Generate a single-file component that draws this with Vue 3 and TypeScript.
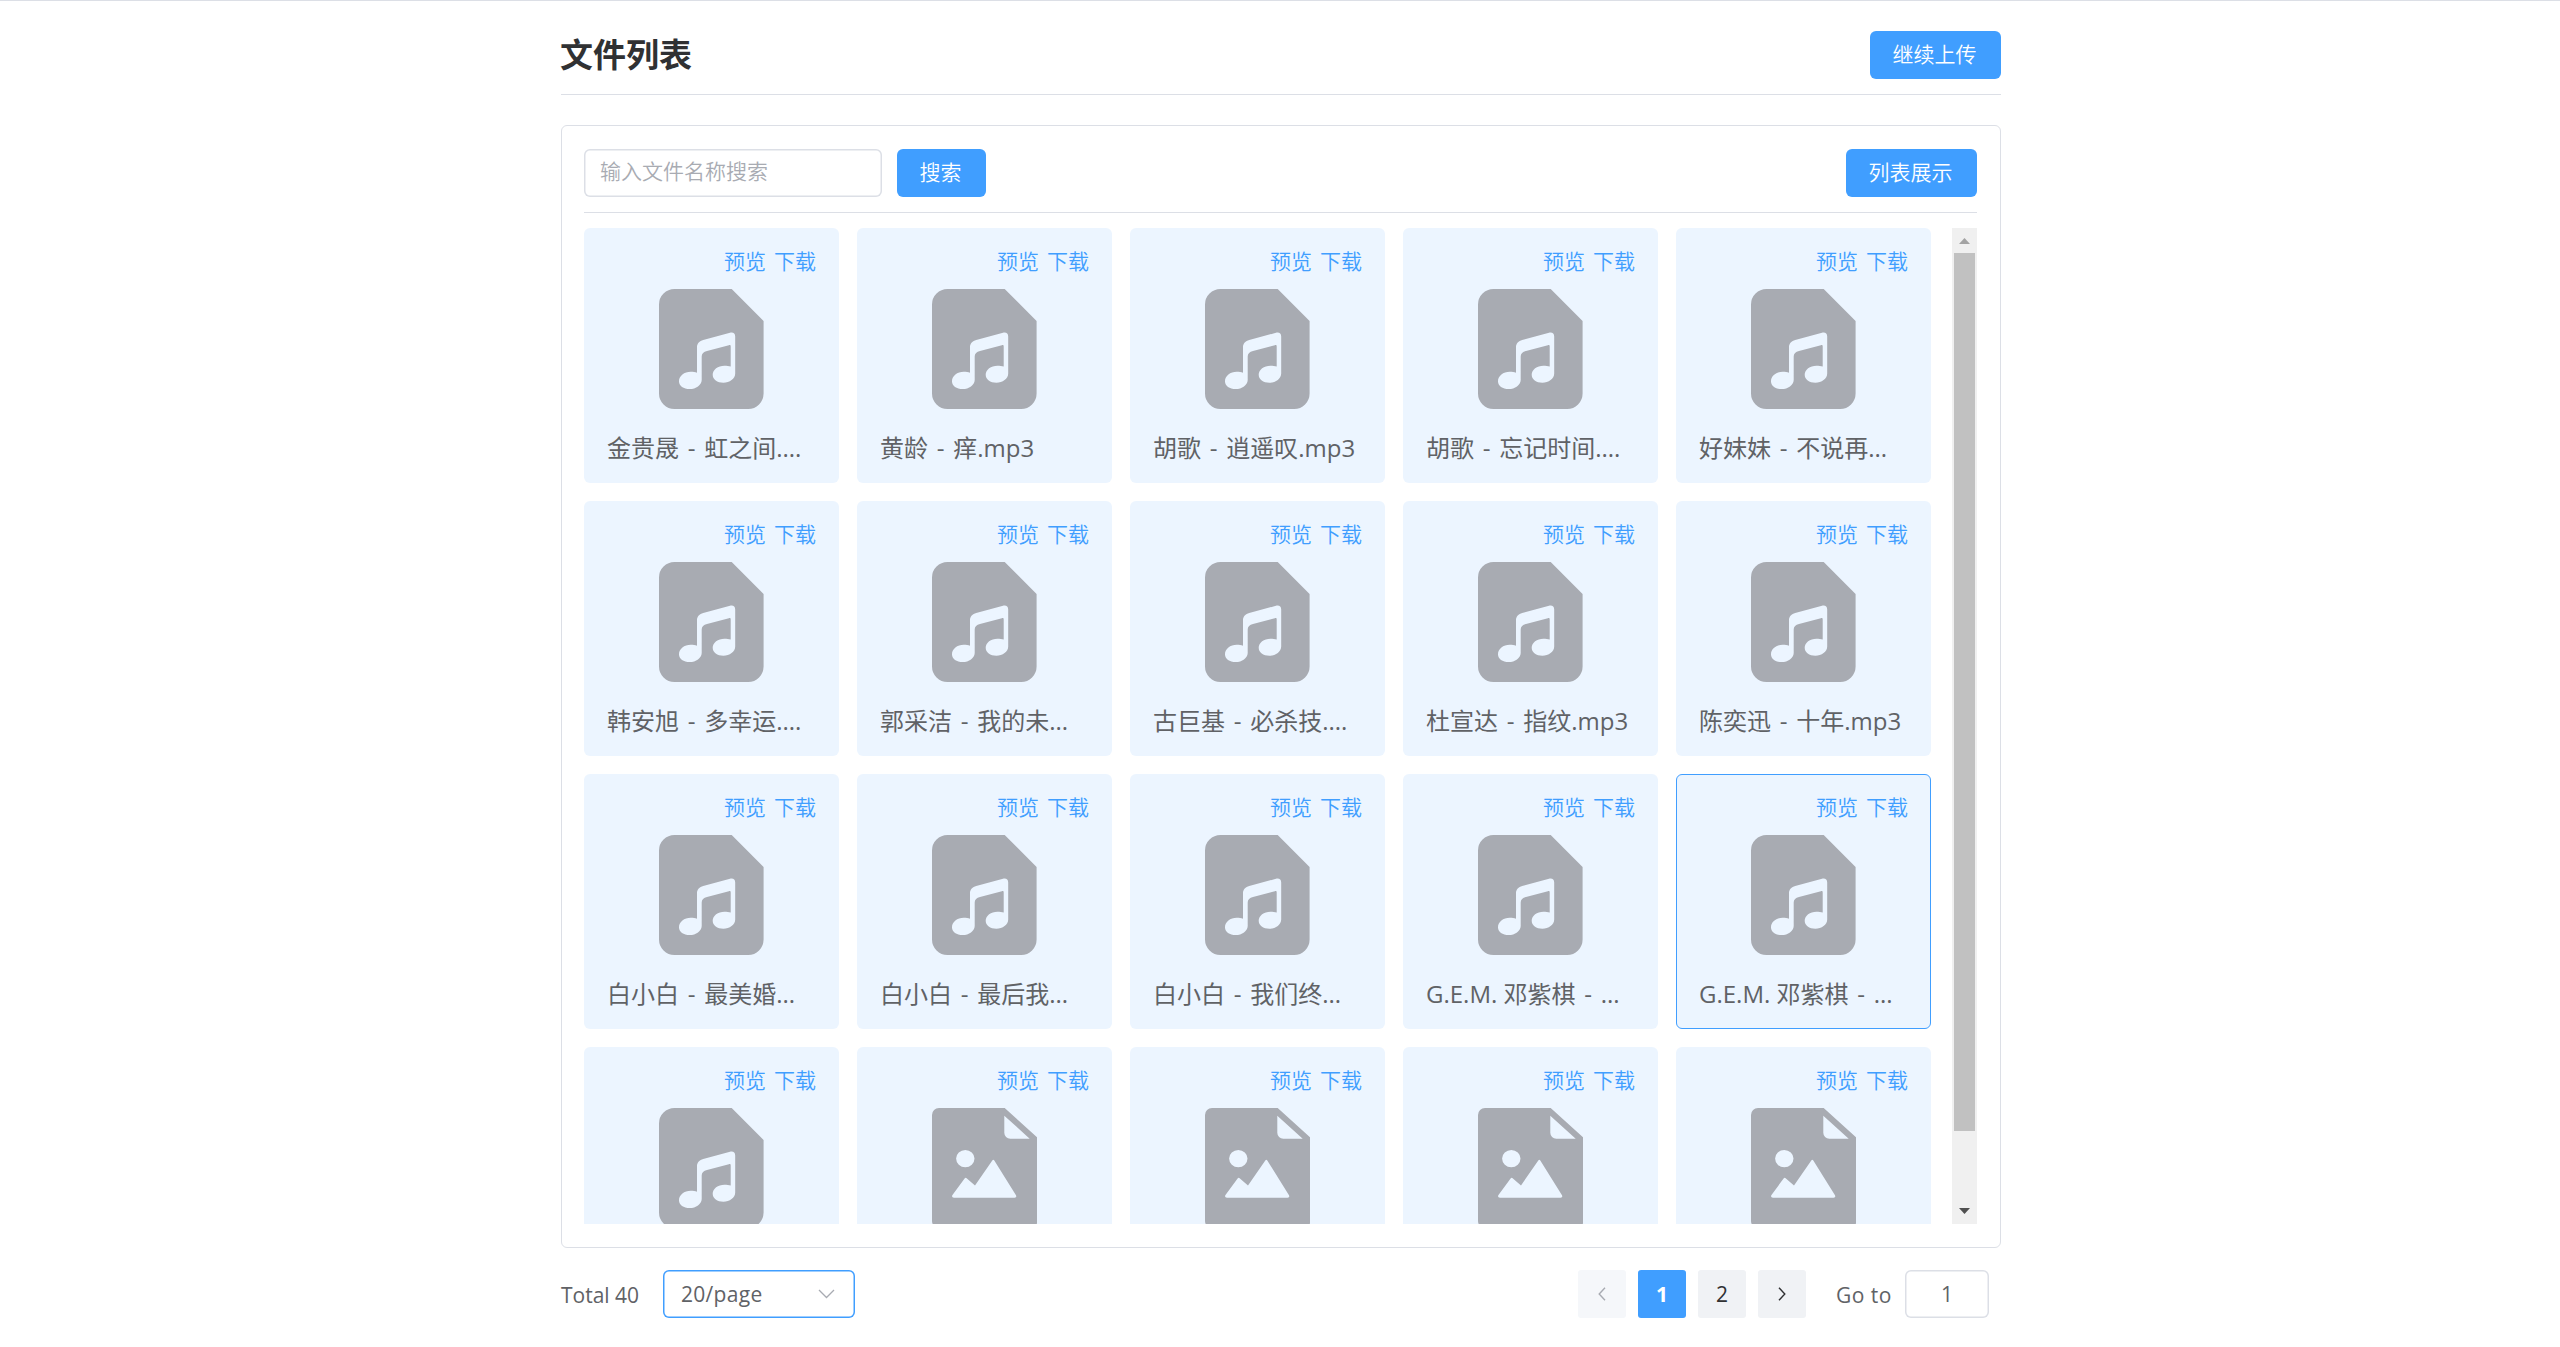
<script setup lang="ts">
interface FileItem {
  name: string
  type: 'music' | 'image'
  active?: boolean
}

const names: string[] = [
  '金贵晟 - 虹之间....',
  '黄龄 - 痒.mp3',
  '胡歌 - 逍遥叹.mp3',
  '胡歌 - 忘记时间....',
  '好妹妹 - 不说再...',
  '韩安旭 - 多幸运....',
  '郭采洁 - 我的未...',
  '古巨基 - 必杀技....',
  '杜宣达 - 指纹.mp3',
  '陈奕迅 - 十年.mp3',
  '白小白 - 最美婚...',
  '白小白 - 最后我...',
  '白小白 - 我们终...',
  'G.E.M. 邓紫棋 - ...',
  'G.E.M. 邓紫棋 - ...',
]

const files: FileItem[] = [
  ...names.map((name, i): FileItem => ({ name, type: 'music', active: i === 14 })),
  { name: '', type: 'music' },
  { name: '', type: 'image' },
  { name: '', type: 'image' },
  { name: '', type: 'image' },
  { name: '', type: 'image' },
]

// Splits "artist - title" so the separator can carry its own spacing.
const parts = (name: string): string[] => name.split('-')
</script>

<template>
  <div class="page">
    <main class="container">
      <header class="header">
        <h1 class="title">文件列表</h1>
        <button class="btn wide">继续上传</button>
      </header>

      <section class="panel">
        <div class="toolbar">
          <div class="search-input"><span>输入文件名称搜索</span></div>
          <button class="btn search">搜索</button>
          <button class="btn wide push">列表展示</button>
        </div>

        <div class="list">
          <div class="grid">
            <article v-for="(file, i) in files" :key="i" class="card" :class="{ active: file.active }">
              <div class="links"><a>预览</a><a>下载</a></div>
              <svg v-if="file.type === 'music'" class="icon" width="104.6" height="120" viewBox="0 0 104.6 120">
                <path
                  fill-rule="evenodd"
                  d="M15.500 0H72.700L104.600 32V104.500A15.500 15.500 0 0 1 89.100 120H15.500A15.500 15.500 0 0 1 0 104.500V15.500A15.500 15.500 0 0 1 15.500 0ZM38 83.800V58c0-3.600 2.600-6 6.200-7.100L71 43.800c3.200-.8 5.200.8 5.200 3.800V84.500c0 5.200-5.600 9.300-11.800 9.300s-10.700-3.300-10.700-8c0-5.200 5.300-9.100 11.700-9.100 2.400 0 4.600.2 6.300.9V57.500c0-1.200-.6-1.600-1.800-1.300L48 61.900c-3.400.9-5.300 2.600-5.300 5.600V91c0 5-5.800 9.100-12 9.100S20 96.800 20 92.200c0-5.200 5.300-9.400 11.700-9.400 2.400 0 4.600.3 6.300 1Z"
                />
              </svg>
              <svg v-else class="icon" width="105.4" height="120" viewBox="0 0 105.4 120">
                <path
                  fill-rule="evenodd"
                  d="M7 0H72.700L105.400 29.700V113a7 7 0 0 1-7 7H7a7 7 0 0 1-7-7V7a7 7 0 0 1 7-7ZM72.300 7.700V24.700a6 6 0 0 0 6 6H97.700ZM33.300 41.900a9.200 8.700 0 1 0 0 17.400a9.200 8.700 0 1 0 0-17.400ZM60.300 52.400Q61.300 51 62.300 52.400L84 87.300Q85 89.700 82.700 89.700H22Q19.300 89.700 20.300 87.200L32.600 70.500Q33.700 69.200 34.900 70.500L43 77.400Z"
                />
              </svg>
              <div v-if="file.name" class="name">{{ parts(file.name)[0] }}<span class="dash">-</span>{{ parts(file.name)[1] }}</div>
            </article>
          </div>

          <div class="scrollbar">
            <svg class="arrow up" width="11" height="6" viewBox="0 0 11 6"><path d="M5.500 0L11 6H0Z" /></svg>
            <div class="thumb"></div>
            <svg class="arrow down" width="11" height="6" viewBox="0 0 11 6"><path d="M0 0H11L5.500 6Z" /></svg>
          </div>
        </div>
      </section>

      <footer class="pagination">
        <span class="total">Total 40</span>
        <div class="select">
          <span>20/page</span>
          <svg width="17" height="10" viewBox="0 0 17 10"><path d="M1 1L8.500 8.500L16 1" /></svg>
        </div>
        <button class="pager prev">
          <svg width="8" height="14" viewBox="0 0 8 14"><path d="M7 .8L1.200 7L7 13.200" /></svg>
        </button>
        <button class="pager current">1</button>
        <button class="pager">2</button>
        <button class="pager next">
          <svg width="8" height="14" viewBox="0 0 8 14"><path d="M1 .8L6.800 7L1 13.200" /></svg>
        </button>
        <span class="goto">Go to</span>
        <div class="goto-input">1</div>
      </footer>
    </main>
  </div>
</template>

<style>
body {
  background: #fff;
}
</style>

<style scoped>
.page {
  box-sizing: border-box;
  height: 1347px;
  overflow: hidden;
  border-top: 1px solid #dcdfe6;
  font-family: 'Open Sans', 'Noto Sans CJK SC', sans-serif;
  font-size: 21px;
  color: #606266;
}

.page * {
  box-sizing: border-box;
}

.container {
  width: 1440px;
  margin-left: 561px;
}

.header {
  display: flex;
  align-items: center;
  justify-content: space-between;
  height: 94px;
  padding: 30px 0 15px;
  border-bottom: 1px solid #dcdfe6;
}

.title {
  margin: 0 0 0 -1px;
  font-size: 33px;
  line-height: 48px;
  font-weight: 700;
  color: #303133;
}

.btn {
  height: 48px;
  padding: 0 2px 1px 0;
  border: 0;
  border-radius: 6px;
  background: #409eff;
  color: #fff;
  font-family: inherit;
  font-size: 21px;
  font-weight: 350;
  line-height: 47px;
}

.btn.wide {
  width: 131px;
}

.btn.search {
  width: 89px;
  margin-left: 15px;
}

.btn.push {
  margin-left: auto;
}

.panel {
  height: 1123px;
  margin-top: 30px;
  padding: 23px 23px 0 22px;
  border: 1px solid #dcdfe6;
  border-radius: 6px;
}

.toolbar {
  display: flex;
  height: 64px;
  border-bottom: 1px solid #dcdfe6;
}

.search-input {
  width: 298px;
  height: 48px;
  padding-left: 16px;
  border-radius: 6px;
  box-shadow: inset 0 0 0 1.5px #dcdfe6;
  line-height: 45px;
  font-weight: 350;
  color: #a8abb2;
}

.list {
  display: flex;
  justify-content: space-between;
  height: 996px;
  margin-top: 15px;
  overflow: hidden;
}

.grid {
  display: grid;
  grid-template-columns: repeat(5, 255px);
  grid-auto-rows: 255px;
  gap: 18px;
}

.card {
  display: flex;
  flex-direction: column;
  padding: 16px 22px 0;
  border: 1px solid transparent;
  border-radius: 6px;
  background: #ecf5ff;
}

.card.active {
  border-color: #409eff;
}

.links {
  display: flex;
  justify-content: flex-end;
  gap: 8px;
  height: 32px;
  line-height: 32px;
  font-weight: 350;
  color: #409eff;
}

.icon {
  flex: none;
  align-self: center;
  margin-top: 12px;
  fill: #a8abb2;
}

.name {
  height: 36px;
  margin-top: 21px;
  font-size: 24px;
  line-height: 36px;
  white-space: nowrap;
}

.dash {
  margin: 0 2.5px;
}

.scrollbar {
  display: flex;
  flex-direction: column;
  align-items: center;
  width: 25px;
  height: 996px;
  background: #f0f0f0;
}

.arrow {
  flex: none;
}

.arrow.up {
  margin-top: 10px;
  fill: #a3a3a3;
}

.arrow.down {
  margin: auto 0 10px;
  fill: #505050;
}

.thumb {
  width: 21px;
  height: 878px;
  margin-top: 9px;
  background: #c1c1c1;
}

.pagination {
  display: flex;
  align-items: center;
  height: 48px;
  margin-top: 22px;
  line-height: 48px;
}

.total {
  width: 102px;
  padding-top: 1px;
  white-space: nowrap;
}

.select {
  display: flex;
  align-items: center;
  justify-content: space-between;
  width: 192px;
  height: 48px;
  margin-right: auto;
  padding: 0 20px 0 18px;
  border-radius: 6px;
  box-shadow: inset 0 0 0 1.5px #409eff;
  letter-spacing: 0.3px;
}

.select svg {
  fill: none;
  stroke: #a8abb2;
  stroke-width: 1.3;
}

.pager {
  display: flex;
  align-items: center;
  justify-content: center;
  width: 48px;
  height: 48px;
  margin-right: 12px;
  padding: 0;
  border: 0;
  border-radius: 3px;
  background: #f0f2f5;
  color: #303133;
  font-family: inherit;
  font-size: 21px;
}

.pager svg {
  fill: none;
  stroke: #303133;
  stroke-width: 1.4;
}

.pager.prev {
  background: #f5f7fa;
}

.pager.prev svg {
  stroke: #a8abb2;
}

.pager.current {
  background: #409eff;
  color: #fff;
  font-weight: 700;
}

.goto {
  width: 69px;
  margin-left: 18px;
  padding-top: 1px;
  letter-spacing: 0.5px;
  white-space: nowrap;
}

.goto-input {
  width: 84px;
  height: 48px;
  margin-right: 12px;
  border-radius: 6px;
  box-shadow: inset 0 0 0 1.5px #dcdfe6;
  text-align: center;
}
</style>
